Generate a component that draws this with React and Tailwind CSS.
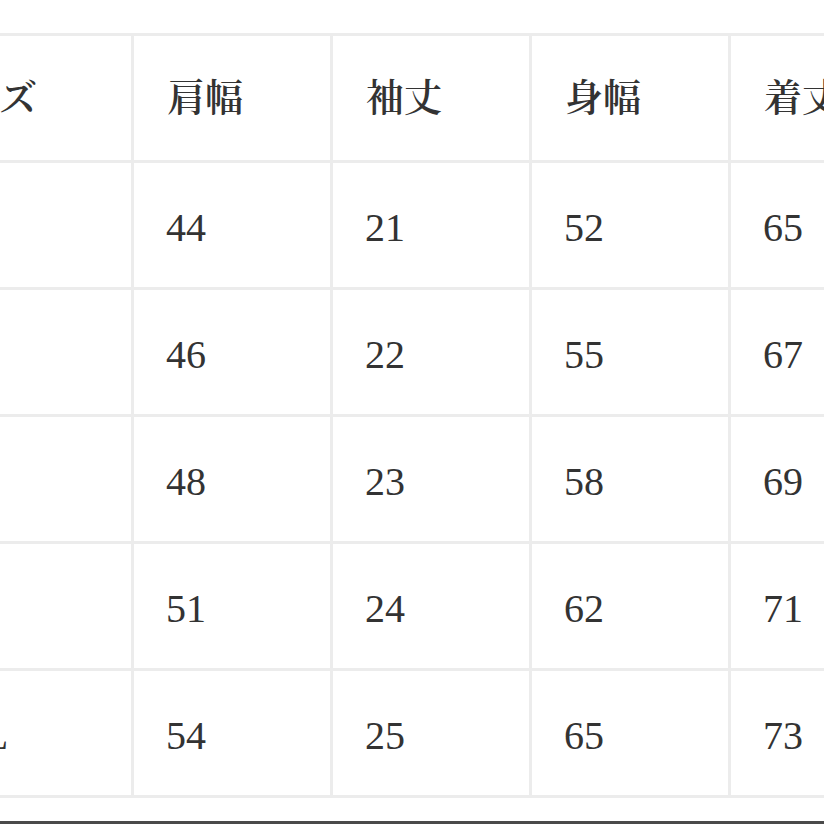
import React from "react";

const headers = ["サイズ", "肩幅", "袖丈", "身幅", "着丈"];
const rows = [
  ["S", "44", "21", "52", "65"],
  ["M", "46", "22", "55", "67"],
  ["L", "48", "23", "58", "69"],
  ["XL", "51", "24", "62", "71"],
  ["XXL", "54", "25", "65", "73"],
];

export default function App() {
  return (
    <div className="w-[824px] h-[824px] overflow-hidden bg-white flex flex-col">
      <div className="pt-[33px] ml-[-115px]">
        <div className="grid grid-cols-[243px_196px_196px_196px_196px] grid-rows-[124px_124px_124px_124px_124px_124px] gap-[3px] p-[3px] bg-[#ececec] w-max">
          {headers.map((h, i) => (
            <div
              key={"h" + i}
              className={
                "bg-white flex items-center pb-[8px] text-[38px] font-semibold text-[#333] whitespace-nowrap " +
                (i === 0 ? "pl-[38px]" : "pl-[33px]")
              }
              style={{ fontFamily: '"Noto Serif CJK JP", "Noto Sans CJK JP", serif' }}
            >
              {h}
            </div>
          ))}
          {rows.map((r, ri) =>
            r.map((c, ci) => (
              <div
                key={ri + "-" + ci}
                className={
                  "bg-white flex items-center pt-[6px] text-[40px] text-[#333] whitespace-nowrap font-['Liberation_Serif',serif] " +
                  (ci === 0 ? "pl-[38px]" : "pl-[32px]")
                }
              >
                {c}
              </div>
            ))
          )}
        </div>
      </div>
      <div className="flex-1" />
      <div className="h-[3px] bg-[#4a4a4a]" />
    </div>
  );
}
